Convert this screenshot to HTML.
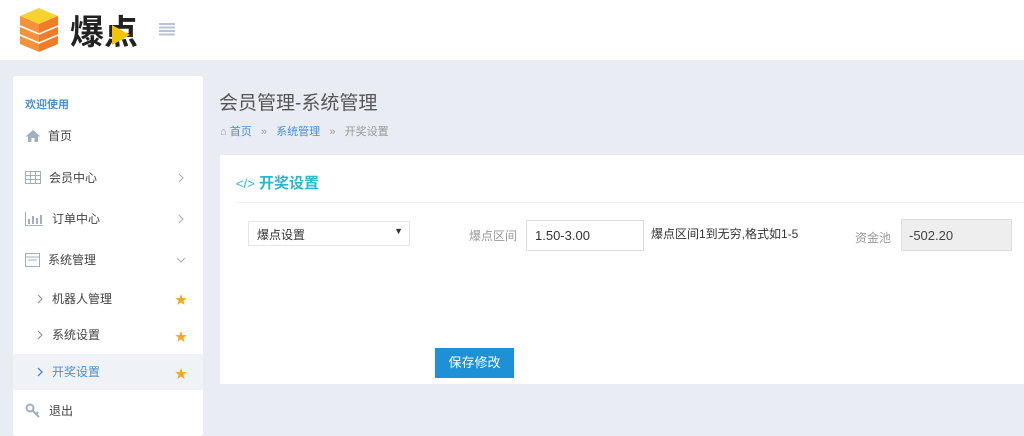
<!DOCTYPE html>
<html><head><meta charset="utf-8"><style>
*{margin:0;padding:0;box-sizing:border-box}
body{width:1024px;height:423px;overflow:hidden;background:#e9ecf3;font-family:"Liberation Sans","Noto Sans CJK SC",sans-serif;position:relative;font-size:12px;color:#333}
.abs{position:absolute}
.hdr{left:0;top:0;width:1024px;height:60px;background:#fff}
.side{left:13px;top:76px;width:190px;height:360px;background:#fff;border-radius:3px}
.it{position:absolute;left:0;width:190px;font-size:12px;color:#444;line-height:16px}
.card{left:220px;top:155px;width:804px;height:229px;background:#fff}
.star{position:absolute;left:162px}
.chev{position:absolute;left:165px}
</style></head><body>
<div class="abs hdr">
 <svg class="abs" style="left:18px;top:8px" width="42" height="44" viewBox="0 0 42 44">
  <polygon points="2,8 21,0 40,8 21,16" fill="#f7d330"/>
  <polygon points="2,8 21,16 21,44 2,36" fill="#f6923a"/>
  <polygon points="40,8 21,16 21,44 40,36" fill="#f27b2a"/>
  <path d="M2,18 L21,26 L40,18 M2,27 L21,35 L40,27" stroke="#fff" stroke-width="1.5" fill="none"/>
 </svg>
 <div class="abs" style="left:70px;top:8px;font-size:34px;font-weight:bold;color:#222;letter-spacing:0px;font-family:'Noto Sans CJK SC',sans-serif;line-height:44px">爆点</div>
 <svg class="abs" style="left:112px;top:25px" width="18" height="20"><polygon points="0,0 18,10 0,20" fill="#f5c400"/></svg>
 <svg class="abs" style="left:159px;top:23px" width="16" height="13"><g fill="#b8c4d6"><rect y="0" width="16" height="2"/><rect y="3.5" width="16" height="2"/><rect y="7" width="16" height="2"/><rect y="10.5" width="16" height="2"/></g></svg>
</div>
<div class="abs side">
 <div class="it" style="top:21px;left:12px;color:#4a8fd0;font-size:11px;font-weight:bold">欢迎使用</div>
 <div class="it" style="top:53px;left:12px"><svg width="16" height="14" viewBox="0 0 16 14"><path d="M8 1L0.5 7.5H3V13H6.5V9H9.5V13H13V7.5H15.5Z" fill="#9fb0c2"/></svg><span style="position:absolute;left:23px;top:-1px">首页</span></div>
 <div class="it" style="top:95px;left:12px"><svg width="16" height="14"><rect x=".5" y=".5" width="15" height="12" fill="none" stroke="#9fb0c2"/><path d="M0 4.5H16M0 8.5H16M5.5 0V13M10.5 0V13" stroke="#9fb0c2"/></svg><span style="position:absolute;left:24px;top:-1px">会员中心</span></div>
 <svg class="chev" style="top:97px" width="6" height="10"><path d="M1 1L5 5L1 9" stroke="#aab" fill="none"/></svg>
 <div class="it" style="top:136px;left:12px"><svg width="18" height="14"><path d="M.5 0V13.5H18" stroke="#9fb0c2" fill="none"/><g fill="#9fb0c2"><rect x="3" y="7" width="2" height="5"/><rect x="7" y="4" width="2" height="8"/><rect x="11" y="6" width="2" height="6"/><rect x="15" y="3" width="2" height="9"/></g></svg><span style="position:absolute;left:27px;top:-1px">订单中心</span></div>
 <svg class="chev" style="top:138px" width="6" height="10"><path d="M1 1L5 5L1 9" stroke="#aab" fill="none"/></svg>
 <div class="it" style="top:177px;left:12px"><svg width="15" height="14"><rect x=".5" y=".5" width="14" height="13" fill="none" stroke="#9fb0c2"/><path d="M0 4H15M3 7H12" stroke="#9fb0c2"/></svg><span style="position:absolute;left:23px;top:-1px">系统管理</span></div>
 <svg class="chev" style="top:181px;left:163px" width="10" height="6"><path d="M1 1L5 5L9 1" stroke="#aab" fill="none"/></svg>
 <div class="it" style="top:216px;left:24px"><svg width="6" height="10"><path d="M1 1L5 5L1 9" stroke="#889" fill="none"/></svg><span style="position:absolute;left:15px;top:-1px">机器人管理</span></div>
 <svg class="star" style="top:218px" width="12" height="11" viewBox="0 0 24 23"><path d="M12 0L15 8.5H24L17 14L19.5 23L12 17.5L4.5 23L7 14L0 8.5H9Z" fill="#f6a623"/></svg>
 <div class="it" style="top:252px;left:24px"><svg width="6" height="10"><path d="M1 1L5 5L1 9" stroke="#889" fill="none"/></svg><span style="position:absolute;left:15px;top:-1px">系统设置</span></div>
 <svg class="star" style="top:255px" width="12" height="11" viewBox="0 0 24 23"><path d="M12 0L15 8.5H24L17 14L19.5 23L12 17.5L4.5 23L7 14L0 8.5H9Z" fill="#f6a623"/></svg>
 <div class="abs" style="left:0;top:278px;width:190px;height:36px;background:#eff3f8"></div>
 <div class="it" style="top:289px;left:24px;color:#4a8fd0"><svg width="6" height="10"><path d="M1 1L5 5L1 9" stroke="#4a8fd0" stroke-width="1.4" fill="none"/></svg><span style="position:absolute;left:15px;top:-1px">开奖设置</span></div>
 <svg class="star" style="top:292px" width="12" height="11" viewBox="0 0 24 23"><path d="M12 0L15 8.5H24L17 14L19.5 23L12 17.5L4.5 23L7 14L0 8.5H9Z" fill="#f6a623"/></svg>
 <div class="it" style="top:327px;left:12px"><svg width="16" height="16"><circle cx="5" cy="5" r="3.5" fill="none" stroke="#9fb0c2" stroke-width="2"/><path d="M7.5 7.5L14 14M11 11L13 9" stroke="#9fb0c2" stroke-width="2"/></svg><span style="position:absolute;left:24px;top:0">退出</span></div>
</div>
<div class="abs" style="left:219px;top:88px;font-size:19px;color:#555">会员管理-系统管理</div>
<div class="abs" style="left:220px;top:123px;font-size:11px;color:#999"><span style="color:#999">⌂</span> <span style="color:#4a8fd0">首页</span>&nbsp;&nbsp;&nbsp;»&nbsp;&nbsp;&nbsp;<span style="color:#4a8fd0">系统管理</span>&nbsp;&nbsp;&nbsp;»&nbsp;&nbsp;&nbsp;开奖设置</div>
<div class="abs card">
 <div class="abs" style="left:16px;top:17px;font-size:15px;font-weight:bold;color:#2bb8c8"><span style="font-weight:normal;font-size:13px">&lt;/&gt;</span> 开奖设置</div>
 <div class="abs" style="left:16px;top:47px;width:788px;height:1px;background:#f0f0f0"></div>
 <div class="abs" style="left:28px;top:66px;width:162px;height:25px;border:1px solid #e5e5e5;font-size:12px;padding:4px 8px">爆点设置<span style="position:absolute;right:6px;top:4px;font-size:9px">▼</span></div>
 <div class="abs" style="left:249px;top:72px;color:#999">爆点区间</div>
 <div class="abs" style="left:306px;top:65px;width:118px;height:31px;border:1px solid #ddd;font-size:13px;padding:7px 8px">1.50-3.00</div>
 <div class="abs" style="left:431px;top:70px;font-size:12px">爆点区间1到无穷,格式如1-5</div>
 <div class="abs" style="left:635px;top:74px;color:#999">资金池</div>
 <div class="abs" style="left:681px;top:64px;width:111px;height:32px;border:1px solid #ddd;background:#eee;font-size:13px;padding:8px 7px;color:#444">-502.20</div>
 <div class="abs" style="left:215px;top:193px;width:79px;height:30px;background:#1e90d6;color:#fff;font-size:13px;text-align:center;line-height:30px">保存修改</div>
</div>
</body></html>
